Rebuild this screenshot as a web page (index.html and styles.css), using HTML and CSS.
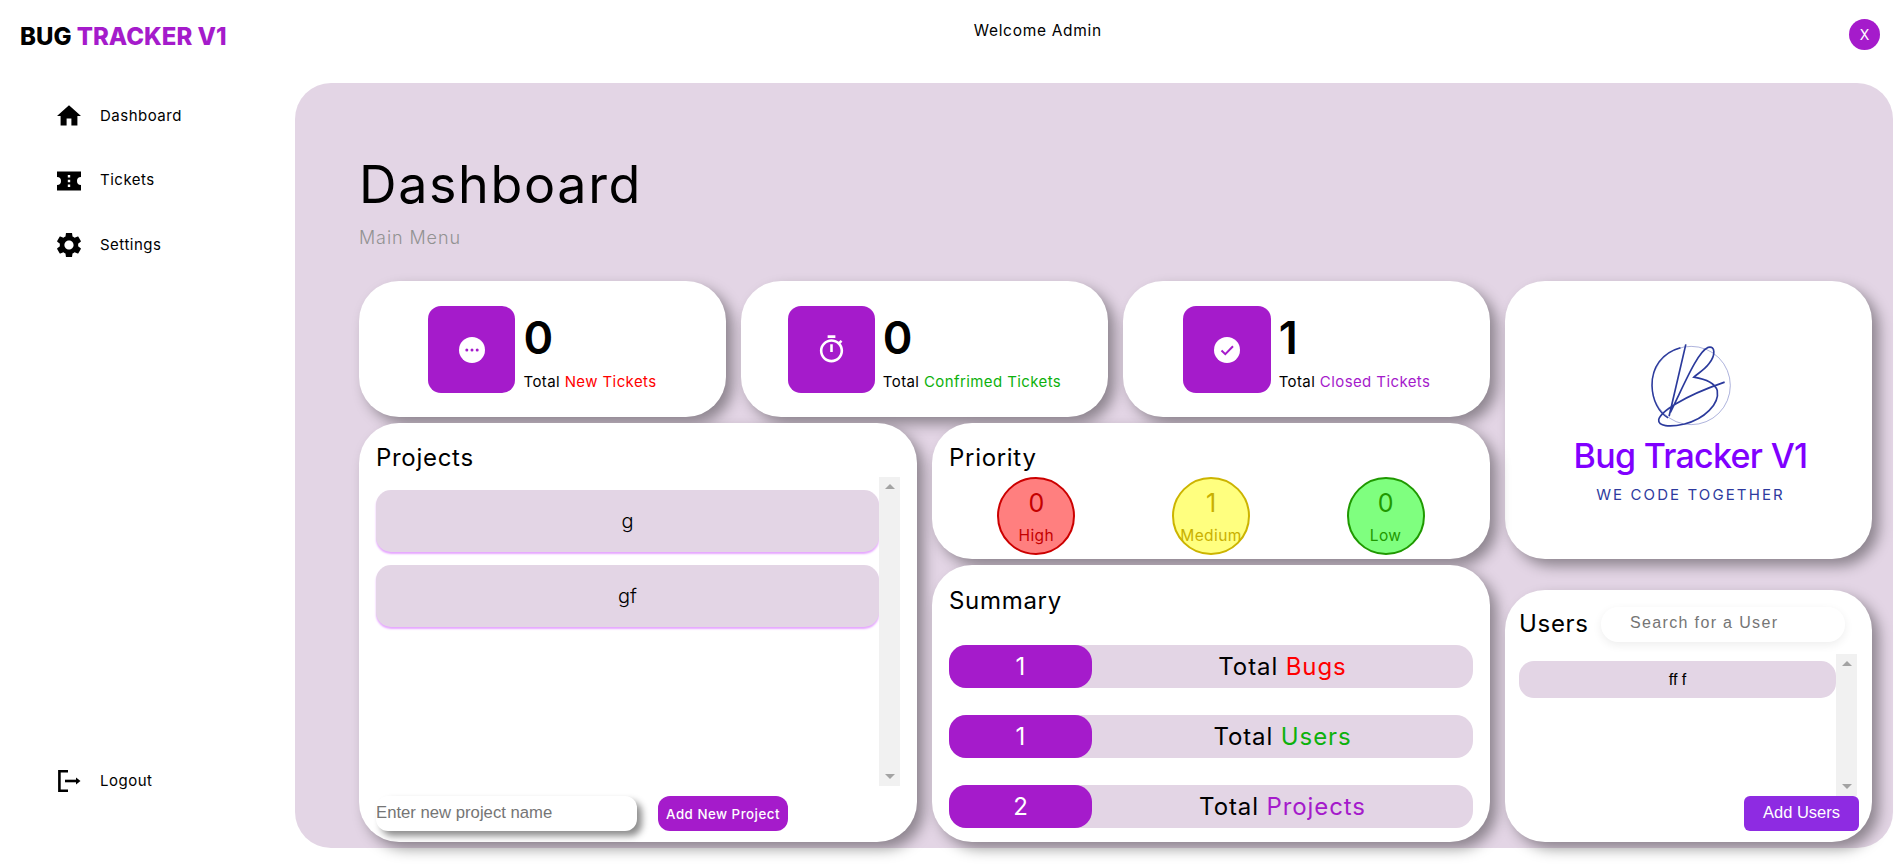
FILE: index.html
```html
<!DOCTYPE html>
<html lang="en">
<head>
<meta charset="utf-8">
<title>Bug Tracker V1</title>
<link rel="stylesheet" href="styles.css">
</head>
<body>
<header class="topbar">
  <div class="brand">BUG <span class="purple">TRACKER V1</span></div>
  <div class="welcome">Welcome Admin</div>
  <div class="avatar">X</div>
</header>
<div class="layout">
  <nav class="sidebar">
    <a class="nav-item"><svg class="nav-icon" viewBox="2 2 20 20"><path d="M10 20v-6h4v6h5v-8h3L12 3 2 12h3v8z"/></svg><span>Dashboard</span></a>
    <a class="nav-item"><svg class="nav-icon" viewBox="0 0 24 24"><path fill-rule="evenodd" d="M0 2.500H24V8a4 4 0 0 0 0 8v5.500H0V16a4 4 0 0 0 0-8zM10.800 6v2.400h2.400V6zM10.800 10.800v2.400h2.400v-2.400zM10.800 15.600V18h2.400v-2.400z"/></svg><span>Tickets</span></a>
    <a class="nav-item"><svg class="nav-icon" viewBox="2.6 2.6 18.8 18.8"><path d="M19.14 12.94c.04-.3.06-.61.06-.94 0-.32-.02-.64-.07-.94l2.03-1.58c.18-.14.23-.41.12-.61l-1.92-3.32c-.12-.22-.37-.29-.59-.22l-2.39.96c-.5-.38-1.03-.7-1.62-.94l-.36-2.54c-.04-.24-.24-.41-.48-.41h-3.84c-.24 0-.43.17-.47.41l-.36 2.54c-.59.24-1.13.57-1.62.94l-2.39-.96c-.22-.08-.47 0-.59.22L2.74 8.87c-.12.21-.08.47.12.61l2.03 1.58c-.05.3-.09.63-.09.94s.02.64.07.94l-2.03 1.58c-.18.14-.23.41-.12.61l1.92 3.32c.12.22.37.29.59.22l2.39-.96c.5.38 1.03.7 1.62.94l.36 2.54c.05.24.24.41.48.41h3.84c.24 0 .44-.17.47-.41l.36-2.54c.59-.24 1.13-.56 1.62-.94l2.39.96c.22.08.47 0 .59-.22l1.92-3.32c.12-.22.07-.47-.12-.61l-2.01-1.58zM12 15.6c-1.98 0-3.6-1.62-3.6-3.6s1.62-3.6 3.6-3.6 3.6 1.62 3.6 3.6-1.62 3.6-3.6 3.6z"/></svg><span>Settings</span></a>
    <a class="nav-item logout"><svg class="nav-icon" viewBox="0 0 24 24"><path class="logout-line" d="M11 2.200H2.400v19.600H11"/><path class="logout-line" d="M8 12h12"/><path d="M19 8.500 23.500 12 19 15.500z"/></svg><span>Logout</span></a>
  </nav>
  <main class="panel">
    <h1 class="page-title">Dashboard</h1>
    <p class="page-sub">Main Menu</p>
    <div class="grid">
      <section class="card stat">
        <div class="stat-icon"><svg class="glyph" viewBox="0 0 26 26"><circle cx="13" cy="13" r="13" fill="#fff"/><circle cx="7.800" cy="13" r="1.500" fill="#a51bcb"/><circle cx="13" cy="13" r="1.500" fill="#a51bcb"/><circle cx="18.200" cy="13" r="1.500" fill="#a51bcb"/></svg></div>
        <div class="stat-text"><div class="stat-num">0</div><div class="stat-label">Total <span class="red">New Tickets</span></div></div>
      </section>
      <section class="card stat">
        <div class="stat-icon"><svg class="timer" viewBox="0 0 24 24"><path fill="#fff" d="M15 1H9v2h6V1zm-4 13h2V8h-2v6zm8.030-6.610 1.420-1.420c-.43-.51-.9-.99-1.410-1.410l-1.420 1.420C16.070 4.740 14.120 4 12 4c-4.970 0-9 4.030-9 9s4.020 9 9 9 9-4.030 9-9c0-2.120-.74-4.070-1.970-5.610zM12 20c-3.870 0-7-3.130-7-7s3.130-7 7-7 7 3.130 7 7-3.130 7-7 7z"/></svg></div>
        <div class="stat-text"><div class="stat-num">0</div><div class="stat-label">Total <span class="green">Confrimed Tickets</span></div></div>
      </section>
      <section class="card stat">
        <div class="stat-icon wide"><svg class="glyph" viewBox="0 0 26 26"><circle cx="13" cy="13" r="13" fill="#fff"/><path d="M7.500 13.500 11.300 17.200 19 9.300" fill="none" stroke="#a51bcb" stroke-width="2"/></svg></div>
        <div class="stat-text"><div class="stat-num">1</div><div class="stat-label">Total <span class="purple">Closed Tickets</span></div></div>
      </section>
      <section class="card logo-card">
        <svg class="logo-mark" viewBox="200 40 260 260">
          <circle class="logo-thin" cx="332" cy="170" r="117"/>
          <path class="logo-arc" d="M300 57C245 72 214 115 215 170c1 45 20 80 48 97"/>
          <path class="logo-sig" d="M316 47 266 262M270 250C310 170 350 70 383 56c22-6 22 24 2 49-15 20-35 30-45 40 30 5 62 15 70 40 7 40-38 85-98 100-45 10-80 7-77-13 5-22 67-67 197-112"/>
        </svg>
        <div class="logo-name">Bug Tracker V1</div>
        <div class="logo-tag">WE CODE TOGETHER</div>
      </section>
      <section class="card projects">
        <h2 class="card-title">Projects</h2>
        <div class="scroll-area project-scroll">
          <div class="list project-list">
            <div class="project-item">g</div>
            <div class="project-item">gf</div>
          </div>
          <div class="scrollbar"><i class="arrow-up"></i><i class="arrow-down"></i></div>
        </div>
        <div class="project-form">
          <input class="project-input" placeholder="Enter new project name">
          <button class="project-btn">Add New Project</button>
        </div>
      </section>
      <section class="card priority">
        <h2 class="card-title">Priority</h2>
        <div class="bubbles">
          <div class="bubble high"><b>0</b><span>High</span></div>
          <div class="bubble medium"><b>1</b><span>Medium</span></div>
          <div class="bubble low"><b>0</b><span>Low</span></div>
        </div>
      </section>
      <section class="card summary">
        <h2 class="card-title">Summary</h2>
        <div class="sum-rows">
          <div class="sum-row"><div class="sum-num">1</div><div class="sum-label">Total <span class="red">Bugs</span></div></div>
          <div class="sum-row"><div class="sum-num">1</div><div class="sum-label">Total <span class="green">Users</span></div></div>
          <div class="sum-row"><div class="sum-num">2</div><div class="sum-label">Total <span class="purple">Projects</span></div></div>
        </div>
      </section>
      <section class="card users">
        <div class="users-head">
          <h2 class="card-title">Users</h2>
          <input class="user-search" placeholder="Search for a User">
        </div>
        <div class="scroll-area user-scroll">
          <div class="list user-list"><div class="user-item">ff f</div></div>
          <div class="scrollbar"><i class="arrow-up"></i><i class="arrow-down"></i></div>
        </div>
        <div class="users-foot"><button class="user-btn">Add Users</button></div>
      </section>
    </div>
  </main>
</div>
</body>
</html>
```
FILE: styles.css
```css
* { box-sizing: border-box; }
html, body { margin: 0; height: 864px; overflow: hidden; }
body { background: #fff; color: #000; font-family: Inter, "Liberation Sans", sans-serif; }
.purple { color: #a51bcb; }
.red { color: #ff0000; }
.green { color: #0db10d; }

.topbar { height: 83px; display: flex; justify-content: space-between; align-items: flex-start; padding: 0 20px; }
.brand { margin-top: 20px; font-size: 24px; line-height: 34px; font-weight: 800; letter-spacing: 0; white-space: nowrap; }
.welcome { margin-top: 21px; font-size: 15.500px; line-height: 20px; letter-spacing: 0.700px; }
.avatar { margin-top: 19px; width: 31px; height: 31px; border-radius: 50%; background: #a51bcb; color: #fff; display: flex; align-items: center; justify-content: center; font-size: 14px; }

.layout { display: flex; height: 765px; padding-right: 7px; }
.sidebar { width: 295px; flex: none; display: flex; flex-direction: column; gap: 40.500px; padding: 21px 0 55px 57px; }
.nav-item { display: flex; align-items: center; gap: 19px; height: 24px; font-size: 15px; letter-spacing: 0.500px; color: #000; }
.nav-item span { margin-bottom: 2px; }
.nav-icon { width: 24px; height: 24px; flex: none; fill: #000; }
.logout { margin-top: auto; }
.logout-line { fill: none; stroke: #000; stroke-width: 2.600; }

.panel { flex: 1; background: #e3d5e5; border-radius: 36px; padding: 66px 20px 0 64px; }
.page-title { margin: 0; font-size: 52px; line-height: 72px; font-weight: 400; letter-spacing: 1.650px; }
.page-sub { margin: 3px 0 29px; font-size: 18px; line-height: 28px; font-weight: 300; color: #929292; letter-spacing: 0.900px; }

.grid { display: grid; grid-template-columns: repeat(8, 176px); grid-template-rows: 136px 136px 277px; column-gap: 15px; row-gap: 6px; }
.card { background: #fff; border-radius: 40px; box-shadow: 7px 7px 14px rgba(0, 0, 0, 0.38); }
.card-title { margin: 0; font-size: 24px; line-height: 36px; font-weight: 400; letter-spacing: 0.700px; }

.stat { grid-column: span 2; display: flex; justify-content: center; align-items: flex-start; gap: 8px; padding-top: 25px; }
.stat-icon { width: 87px; height: 87px; flex: none; border-radius: 13px; background: #a51bcb; display: flex; align-items: center; justify-content: center; }
.stat-icon.wide { width: 88px; }
.glyph { width: 26px; height: 26px; }
.timer { width: 31px; height: 31px; }
.stat-text { display: flex; flex-direction: column; }
.stat-num { margin-top: 5px; font-size: 45px; line-height: 54px; font-weight: 600; }
.stat-label { margin-top: 6px; font-size: 15px; line-height: 22px; letter-spacing: 0.400px; white-space: nowrap; }

.logo-card { grid-column: span 2; grid-row: span 2; display: flex; flex-direction: column; align-items: center; padding: 61px 0 0 4px; }
.logo-mark { width: 87px; height: 87px; }
.logo-thin { fill: none; stroke: #5c66b8; stroke-width: 1.500; }
.logo-arc { fill: none; stroke: #2b3a9c; stroke-width: 4.500; }
.logo-sig { fill: none; stroke: #2b3a9c; stroke-width: 5; }
.logo-name { margin-top: 5px; font-size: 34px; line-height: 44px; font-weight: 500; color: #8000ff; white-space: nowrap; letter-spacing: -0.700px; }
.logo-tag { margin-top: 7px; font-size: 15px; line-height: 20px; color: #2e3a9e; letter-spacing: 2.100px; white-space: nowrap; }

.projects { grid-column: span 3; grid-row: span 2; padding: 17px 17px 0; display: flex; flex-direction: column; }
.scroll-area { display: flex; }
.list { flex: 1; min-width: 0; }
.scrollbar { width: 21px; flex: none; background: #f1f1f1; display: flex; flex-direction: column; justify-content: space-between; align-items: center; padding: 7px 0; }
.arrow-up, .arrow-down { width: 0; height: 0; border-left: 5px solid transparent; border-right: 5px solid transparent; }
.arrow-up { border-bottom: 5px solid #a3a3a3; }
.arrow-down { border-top: 5px solid #a3a3a3; }
.project-scroll { height: 309px; margin-top: 1px; }
.project-list { padding-top: 13px; display: flex; flex-direction: column; gap: 12px; }
.project-item { height: 62px; margin-bottom: 1px; border-radius: 15px; background: #e3d5e5; box-shadow: 0 2px 2px #e6a6ff; display: flex; align-items: center; justify-content: center; font-size: 20px; font-weight: 300; }
.project-form { margin-top: 10px; display: flex; gap: 21px; }
.project-input { width: 261px; height: 35px; border: 0; outline: 0; padding: 0 0 2px; border-radius: 12px; background: #fff; box-shadow: 5px 5px 7px rgba(0, 0, 0, 0.45); font-family: "Liberation Sans", sans-serif; font-size: 16.700px; }
.project-input::placeholder { color: #757575; opacity: 1; }
.project-btn { width: 130px; height: 35px; border: 0; padding: 0; border-radius: 12px; background: #a51bcb; color: #fff; font-family: Inter, sans-serif; font-size: 13.300px; font-weight: 500; letter-spacing: 0.500px; white-space: nowrap; }

.priority { grid-column: span 3; padding: 17px 17px 0; }
.bubbles { margin-top: 1px; display: flex; justify-content: space-around; }
.bubble { width: 78px; height: 78px; border-radius: 50%; border: 2px solid; display: flex; flex-direction: column; align-items: center; white-space: nowrap; }
.bubble b { font-size: 25px; line-height: 32px; margin-top: 8px; font-weight: 400; }
.bubble span { font-size: 15.500px; line-height: 20px; margin-top: 7px; letter-spacing: 0.400px; }
.high { background: #ff7f7f; border-color: #cc0000; color: #c40000; }
.medium { background: #ffff7f; border-color: #ccb400; color: #c9b000; }
.low { background: #7fff7f; border-color: #1f9900; color: #1f9900; }

.summary { grid-column: span 3; padding: 18px 17px 0; }
.sum-rows { margin-top: 26px; display: flex; flex-direction: column; gap: 27px; }
.sum-row { height: 43px; border-radius: 17px; background: #e3d5e5; display: flex; align-items: center; }
.sum-num { width: 143px; height: 100%; flex: none; border-radius: 17px; background: #a51bcb; color: #fff; display: flex; align-items: center; justify-content: center; font-size: 24px; }
.sum-label { flex: 1; text-align: center; font-size: 24px; letter-spacing: 0.900px; }

.users { grid-column: span 2; margin-top: 25px; padding: 16px 13px 0 14px; display: flex; flex-direction: column; }
.users-head { display: flex; align-items: center; justify-content: space-between; padding-right: 14px; }
.user-search { width: 244px; height: 35px; border: 0; outline: 0; border-radius: 17px; padding: 0 0 2px 29px; background: #fff; box-shadow: 0 3px 10px rgba(0, 0, 0, 0.07); font-family: "Liberation Sans", sans-serif; font-size: 16px; letter-spacing: 1.350px; }
.user-search::placeholder { color: #757575; opacity: 1; }
.user-scroll { height: 142px; margin-top: 12px; margin-right: 2px; }
.user-list { padding-top: 7px; }
.user-item { height: 37px; border-radius: 15px; background: #e3d5e5; display: flex; align-items: center; justify-content: center; font-family: "Liberation Sans", sans-serif; font-size: 16px; }
.users-foot { display: flex; justify-content: flex-end; }
.user-btn { width: 115px; height: 35px; border: 0; padding: 0 0 2px; border-radius: 6px; background: #8e2be2; color: #fff; font-family: "Liberation Sans", sans-serif; font-size: 16.500px; }
```
